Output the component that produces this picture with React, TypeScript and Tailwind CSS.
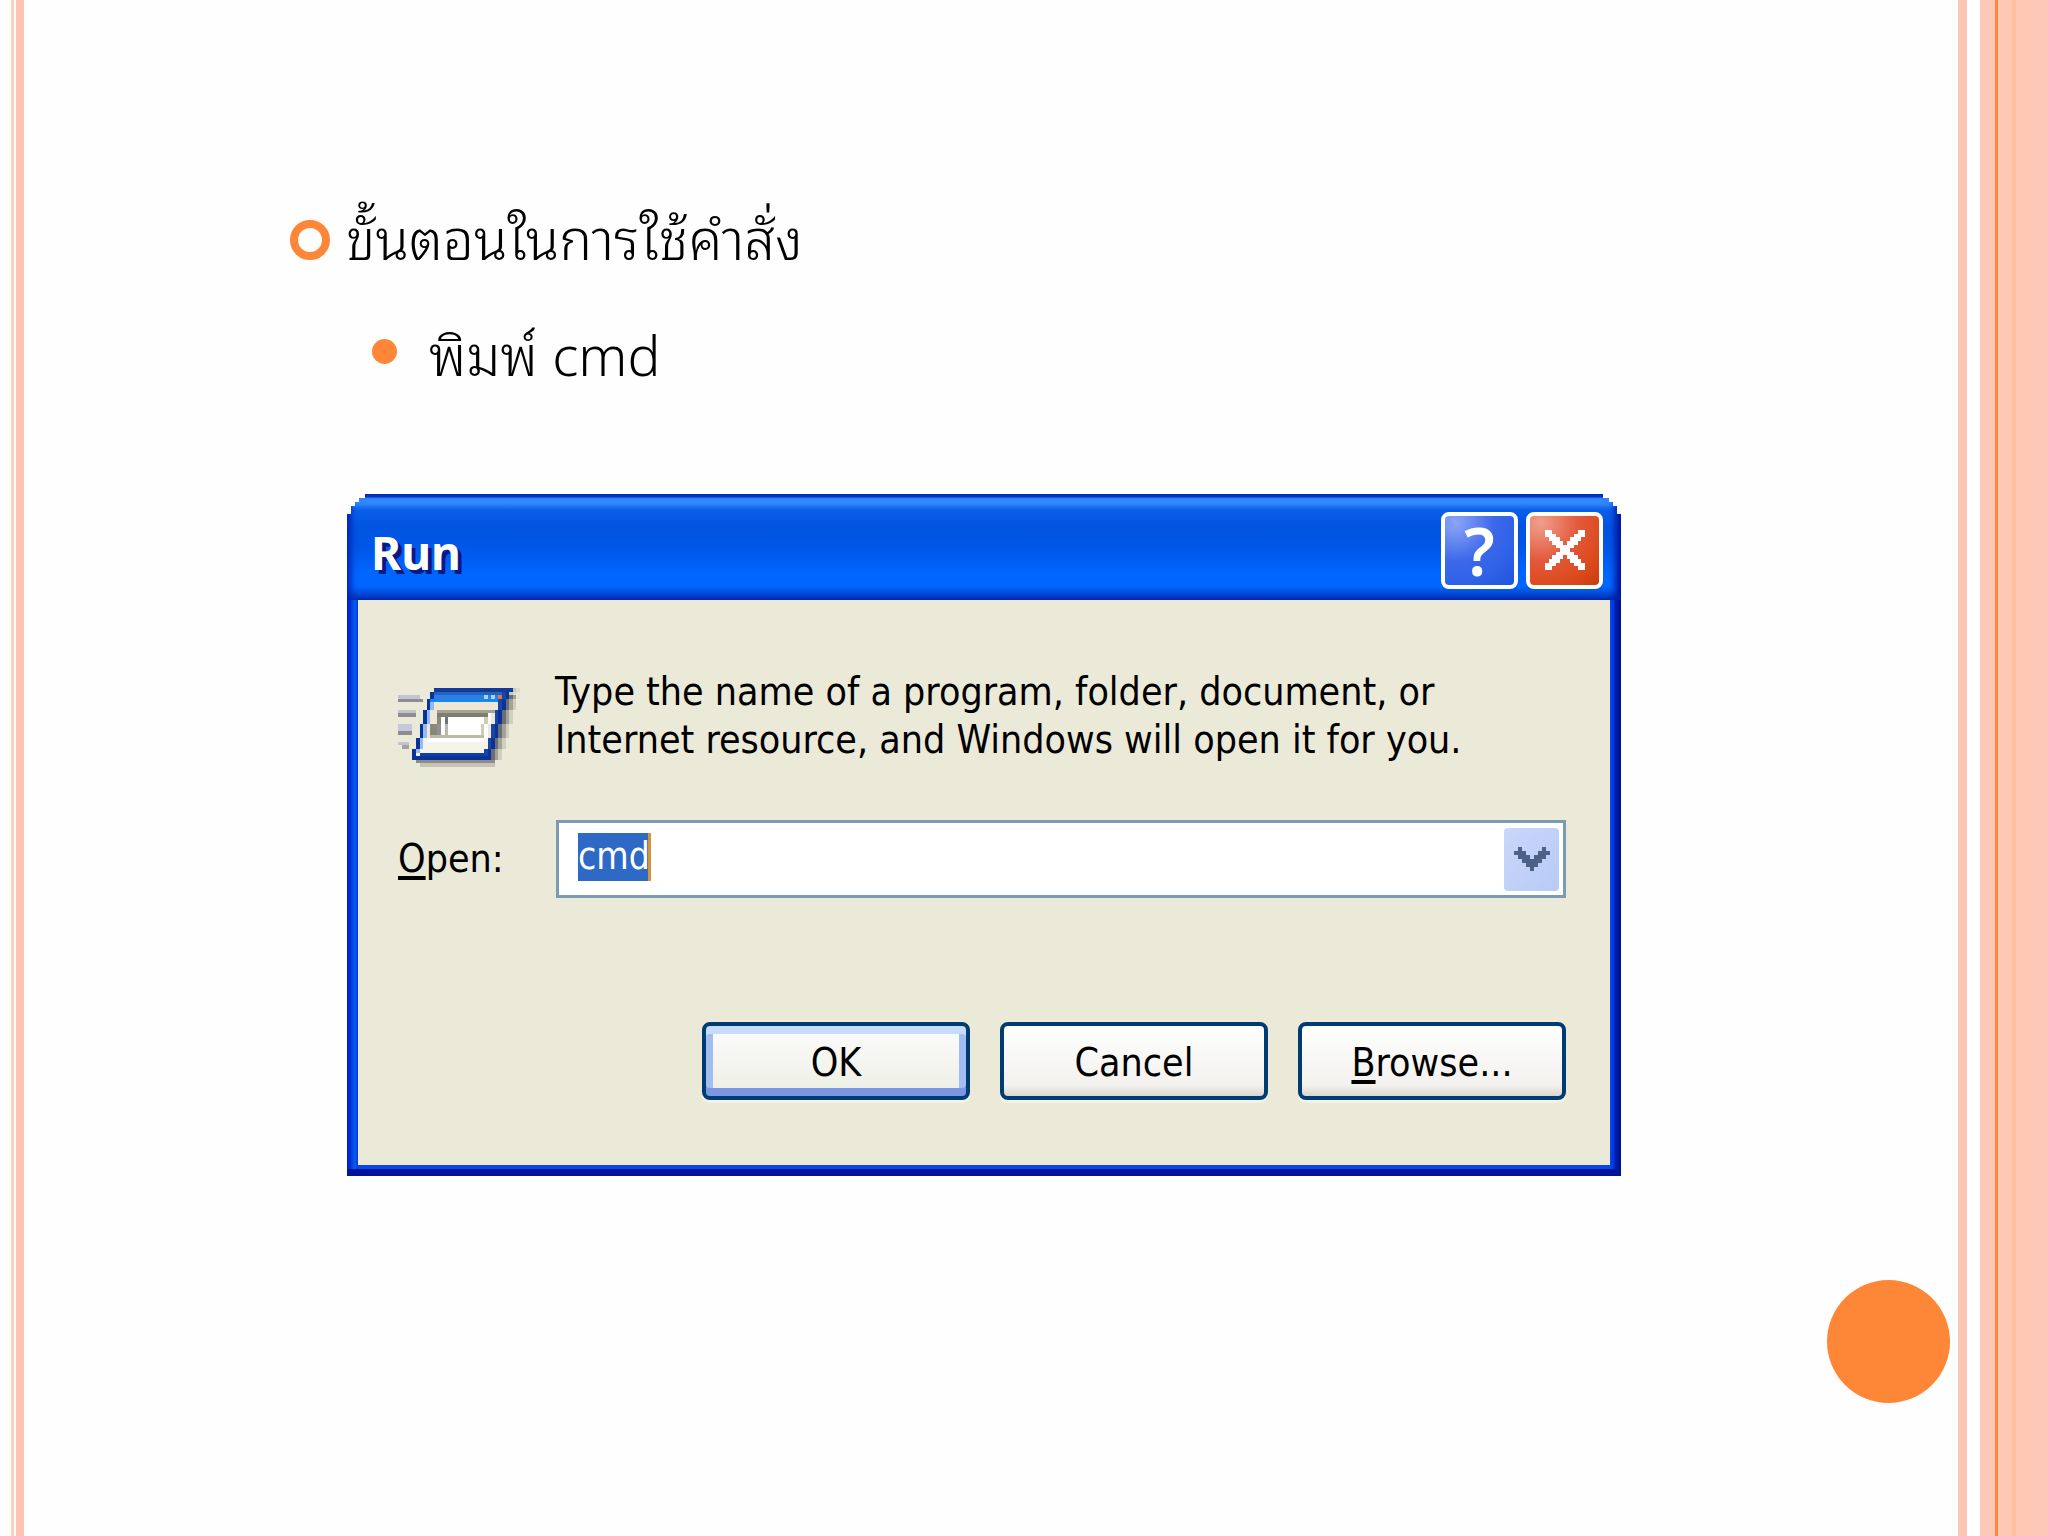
import type { ReactNode } from "react";
import { clsx } from "clsx";

// [x, y, width, height, fill]
type Cell = [number, number, number, number, string];

const NAVY = "#0b3296";

// left edge of the slanted window, one entry per row
const slant = [10, 9, 9, 8, 8, 8, 7, 7, 7, 7, 6, 6, 6, 6, 5, 5, 5, 4, 4, 4];

const windowRow = (x: number, y: number): Cell[] => {
  const shadow: Cell[] = [
    [x + 22, y, 1, 1, y > 1 ? "#6a6d74" : "#c9c8bc"],
    [x + 23, y, 1, 1, y > 1 ? "#a3a298" : "#dedccd"],
    [x + 24, y, 1, 1, y > 2 ? "#d0cebf" : "#e6e4d4"],
  ];
  if (y === 0) return [...shadow, [x, y, 22, 1, "#133a94"]];
  if (y === 19) return [...shadow, [x, y, 22, 1, NAVY]];
  const fill =
    y === 1 ? "#2463c4" : y === 2 ? "#2d7fe0" : y === 3 ? "#1b86ee" : y < 14 ? "#ece7d6" : "#f6f3ea";
  return [
    ...shadow,
    [x, y, 22, 1, NAVY],
    [x + 1, y, 19, 1, y === 18 ? "#0d3fa8" : fill],
    [x + 1, y, 1, 1, y > 3 && y < 18 ? "#8fbdf2" : fill],
    [x + 20, y, 1, 1, "#1746a6"],
  ];
};

const runIcon: Cell[] = [
  // motion lines
  [0, 2, 6, 1, "#c3c4d0"],
  [0, 3, 7, 1, "#8c8c92"],
  [0, 6, 5, 1, "#c3c4d0"],
  [0, 7, 5, 1, "#8c8c92"],
  [0, 10, 4, 2, "#c6c8da"],
  [0, 12, 4, 1, "#8c8c92"],
  [0, 15, 3, 1, "#c3c4d0"],
  [1, 16, 2, 1, "#a5a39e"],
  // drop shadow
  [5, 20, 22, 1, "#8d8c86"],
  [6, 21, 21, 1, "#c6c4b6"],
  ...slant.flatMap((x, y) => windowRow(x, y)),
  // caption buttons
  [24, 2, 1, 1, "#a9d6ff"],
  [26, 2, 1, 1, "#a9d6ff"],
  [28, 2, 1, 1, "#e8734a"],
  // text field
  [11, 6, 16, 1, "#a5a394"],
  [11, 7, 14, 1, "#7f7d70"],
  [11, 8, 2, 2, "#8a887b"],
  [9, 10, 2, 3, "#8a887b"],
  [12, 8, 1, 2, "#ffffff"],
  [13, 8, 1, 2, "#6f7478"],
  [14, 8, 10, 2, "#ffffff"],
  [11, 10, 13, 3, "#ffffff"],
  [11, 10, 1, 3, "#8f9090"],
  [13, 10, 1, 3, "#b5b8b5"],
  [24, 8, 1, 2, "#cfccba"],
  [23, 10, 1, 3, "#cfccba"],
  [25, 7, 1, 3, "#ffffff"],
  [24, 10, 1, 4, "#ffffff"],
  [9, 13, 15, 1, "#bcb9a8"],
  [8, 14, 16, 1, "#ffffff"],
];

const closeIcon: Cell[] = Array.from({ length: 11 }, (_, i): Cell[] => {
  const start = Math.max(i - 1, 0);
  const width = Math.min(i + 2, 11) - start;
  return [
    [start, i, width, 1, "#fff"],
    [11 - start - width, i, width, 1, "#fff"],
  ];
}).flat();

const arrowIcon: Cell[] = [
  [1, 0, 1, 1, "#4d6185"],
  [7, 0, 1, 1, "#4d6185"],
  [0, 1, 3, 1, "#4d6185"],
  [6, 1, 3, 1, "#4d6185"],
  [1, 2, 3, 1, "#4d6185"],
  [5, 2, 3, 1, "#4d6185"],
  [2, 3, 5, 1, "#4d6185"],
  [3, 4, 3, 1, "#4d6185"],
  [4, 5, 1, 1, "#4d6185"],
];

function PixelIcon({ cells, cols, rows, className }: { cells: Cell[]; cols: number; rows: number; className: string }) {
  return (
    <svg viewBox={`0 0 ${cols} ${rows}`} className={className} shapeRendering="crispEdges" aria-hidden="true">
      {cells.map(([x, y, w, h, fill], i) => (
        <rect key={i} x={x} y={y} width={w} height={h} fill={fill} />
      ))}
    </svg>
  );
}

function DialogButton({ children, isDefault }: { children: ReactNode; isDefault?: boolean }) {
  return (
    <button
      type="button"
      className={clsx(
        "h-[78px] w-[268px] rounded-lg border-4 border-[#003c74] bg-linear-to-b pt-1",
        isDefault
          ? "from-[#fcfcfb] to-[#ecefe4] shadow-[0_3px_0_#f4f3ea,inset_0_8px_0_#c6dcfa,inset_0_-8px_0_#7c96e2,inset_7px_0_0_#a3bdf0,inset_-7px_0_0_#a3bdf0]"
          : "from-white via-[#f2f1ee] via-85% to-[#dcd6cf] shadow-[0_3px_0_#f4f3ea]"
      )}
    >
      {children}
    </button>
  );
}

function RunDialog() {
  return (
    <section
      aria-label="Run"
      className="w-full max-w-[1274px] border-b-[7px] border-[#00149a] bg-[#001ea0] bg-[linear-gradient(90deg,#0018c8_0,#0038dc_4px,#0a5cf0_8px,#0038d8_11px,transparent_11px,transparent_calc(100%-11px),#0846ee_calc(100%-11px),#0034dc_calc(100%-7px),#0020b0_calc(100%-6px),#001088_100%)] font-['DejaVu_Sans_Condensed','DejaVu_Sans',sans-serif] text-[39px] leading-12 text-black [clip-path:polygon(0_20px,4px_20px,4px_12px,8px_12px,8px_8px,12px_8px,12px_4px,18px_4px,18px_0,calc(100%-18px)_0,calc(100%-18px)_4px,calc(100%-12px)_4px,calc(100%-12px)_8px,calc(100%-8px)_8px,calc(100%-8px)_12px,calc(100%-4px)_12px,calc(100%-4px)_20px,100%_20px,100%_100%,0_100%)]"
    >
      <header className="flex h-[106px] items-center justify-between bg-[linear-gradient(180deg,#0047d0_0,#0047d0_3px,#3c94ff_4px,#2b84fb_10px,#0a5fea_16px,#0054e0_32px,#0056e6_52px,#0066ff_80px,#0066ff_92px,#0048d0_101px,#003bc0_106px)] pt-[6px] pr-[18px] pl-6 shadow-[inset_4px_0_6px_#0024b8,inset_-6px_0_6px_#0018a0]">
        <h2 className="pt-1 font-['Noto_Sans',sans-serif] text-[46px] leading-none font-bold text-white [text-shadow:4px_4px_0_#0a1883]">
          Run
        </h2>
        <div className="flex gap-2">
          <button
            type="button"
            aria-label="Help"
            className="flex size-[77px] items-center justify-center rounded-lg border-4 border-white bg-[radial-gradient(circle_at_15%_10%,#8ca6f6,#3d68ea_45%,#2f62e8_70%,#1f55d8)] font-['Noto_Sans',sans-serif] text-[66px] leading-none font-semibold text-white"
          >
            ?
          </button>
          <button
            type="button"
            aria-label="Close"
            className="flex size-[77px] items-center justify-center rounded-lg border-4 border-white bg-[radial-gradient(circle_at_15%_10%,#f0a08c,#e2583a_45%,#dc4a1c_75%,#c83c10)]"
          >
            <PixelIcon cells={closeIcon} cols={11} rows={11} className="size-10" />
          </button>
        </div>
      </header>

      <div className="mx-[11px] border-b-4 border-[#0846ee] bg-[#ebe9d8] px-10 pt-17 pb-[65px]">
        <div className="flex items-start gap-[35px]">
          <PixelIcon cells={runIcon} cols={34} rows={22} className="mt-5 h-[79px] w-[122px] shrink-0" />
          <p>
            Type the name of a program, folder, document, or
            <br />
            Internet resource, and Windows will open it for you.
          </p>
        </div>

        <div className="mt-[53px] mr-1 flex items-center">
          <label htmlFor="open" className="w-[158px] shrink-0">
            <span className="underline decoration-4 underline-offset-4">O</span>pen:
          </label>
          <div className="flex h-[78px] flex-1 items-center justify-between border-[3px] border-[#7a9bb2] bg-white pr-1 pl-[19px]">
            <input
              id="open"
              type="text"
              defaultValue="cmd"
              className="mb-1 h-12 w-[73px] border-r-[3px] border-[#ce953a] bg-[#2f69c6] text-[37px] text-white outline-none"
            />
            <button
              type="button"
              aria-label="Show list"
              className="flex h-[63px] w-[55px] items-center justify-center rounded bg-linear-to-br from-[#cbd6fb] to-[#b7cbf5]"
            >
              <PixelIcon cells={arrowIcon} cols={9} rows={6} className="h-6 w-9" />
            </button>
          </div>
        </div>

        <div className="mt-[124px] mr-1 flex justify-end gap-[30px]">
          <DialogButton isDefault>OK</DialogButton>
          <DialogButton>Cancel</DialogButton>
          <DialogButton>
            <span className="underline decoration-4 underline-offset-4">B</span>rowse...
          </DialogButton>
        </div>
      </div>
    </section>
  );
}

export default function App() {
  return (
    <div className="flex min-h-screen bg-[#fefefe]">
      <div className="flex w-6 shrink-0 justify-end gap-0.5" aria-hidden="true">
        <div className="w-[3px] bg-[#fbd3bd]" />
        <div className="w-2 bg-[#fdc4b3]" />
      </div>

      <main className="relative flex-1 pt-[193px] pl-[266px] font-['Noto_Sans_Thai_Looped','Noto_Looped_Thai','Loma','Laksaman','Garuda','Open_Sans',sans-serif] text-black">
        <ul className="text-[55px] leading-[84px] font-light">
          <li>
            <div className="flex items-start gap-4">
              <span className="mt-[27px] size-10 rounded-full border-8 border-[#fe8637]" />
              ขั้นตอนในการใช้คำสั่ง
            </div>
            <ul className="mt-8 pl-[82px]">
              <li className="flex items-start gap-8">
                <span className="mt-[30px] size-[25px] rounded-full bg-[#fe8637]" />
                พิมพ์ cmd
              </li>
            </ul>
          </li>
        </ul>

        <div className="mt-[101px] pr-4 pl-[57px]">
          <RunDialog />
        </div>

        <div className="absolute right-2 bottom-[133px] size-[123px] rounded-full bg-[#fe8637]" />
      </main>

      <div className="flex w-[90px] shrink-0" aria-hidden="true">
        <div className="w-[9px] bg-[#fdc7b6]" />
        <div className="w-[13px] bg-white" />
        <div className="w-[15px] bg-[#fdc8b5]" />
        <div className="w-[3px] bg-[#fe8643]" />
        <div className="w-[14px] bg-[#fec8b2]" />
        <div className="w-1 bg-[#ffbf9f]" />
        <div className="flex-1 bg-[#fdc8b6]" />
      </div>
    </div>
  );
}
